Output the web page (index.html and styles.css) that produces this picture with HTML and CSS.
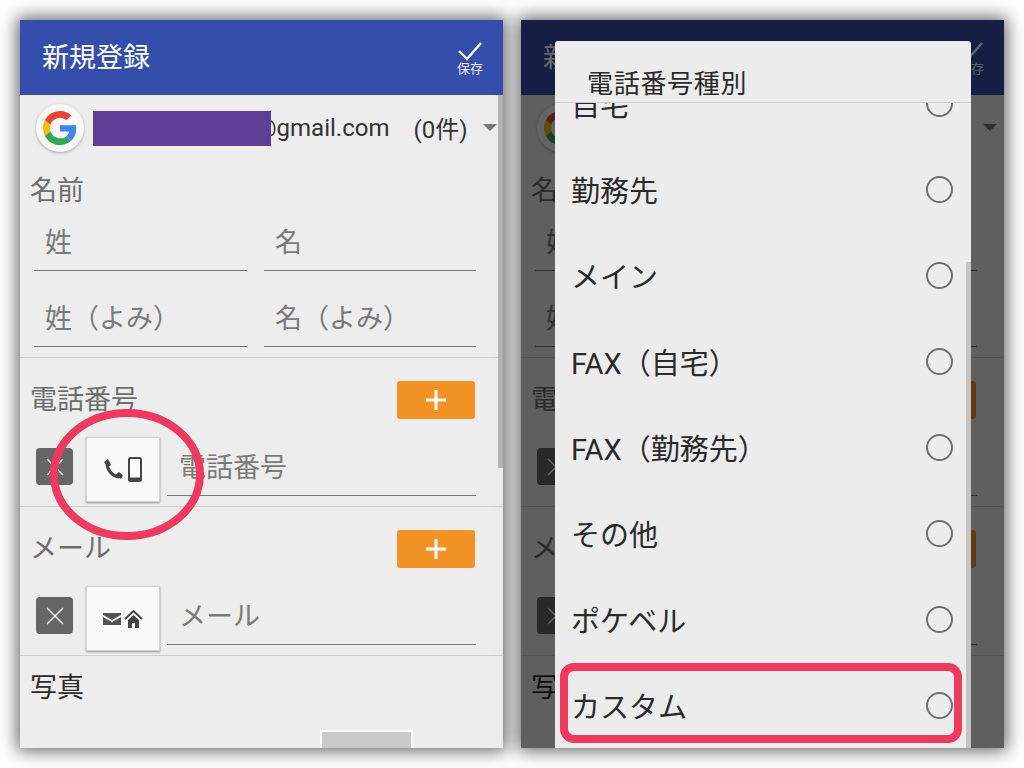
FILE: index.html
```html
<!DOCTYPE html>
<html lang="ja">
<head>
    <meta charset="UTF-8">
    <meta name="viewport" content="width=device-width, initial-scale=1.0">
    <title>新規登録</title>
    <link rel="stylesheet" href="styles.css">
</head>
<body>
    <!-- Left screen: the form -->
    <div class="screen">
        <div class="app-bar">
            <div class="app-title">新規登録</div>
            <div class="save">
                <svg class="save-check" width="26" height="20" viewBox="0 0 26 20"><path d="M2 10l8 8L24 2" fill="none" stroke="#fff" stroke-width="2.4"/></svg>
                <span>保存</span>
            </div>
        </div>
        <div class="scroll-bar"></div>
        <div class="account">
            <div class="g-badge">
                <svg width="34" height="34" viewBox="0 0 48 48"><path fill="#EA4335" d="M24 9.5c3.5 0 6.7 1.3 9.1 3.5l6.8-6.8C35.8 2.4 30.3 0 24 0 14.6 0 6.5 5.4 2.6 13.2l7.9 6.2C12.4 13.6 17.7 9.5 24 9.5z"/><path fill="#4285F4" d="M46.9 24.5c0-1.6-.1-3.1-.4-4.5H24v9h12.9c-.6 3-2.2 5.5-4.7 7.2l7.6 5.9c4.4-4.1 7.1-10.1 7.1-17.600z"/><path fill="#FBBC05" d="M10.5 28.6c-.5-1.4-.8-3-.8-4.6s.3-3.2.8-4.6l-7.9-6.2C.9 16.5 0 20.1 0 24s.9 7.500 2.600 10.800l7.900-6.200z"/><path fill="#34A853" d="M24 48c6.5 0 11.9-2.1 15.8-5.9l-7.6-5.9c-2.1 1.4-4.9 2.3-8.2 2.3-6.3 0-11.6-4.1-13.5-9.9l-7.9 6.2C6.5 42.6 14.6 48 24 48z"/></svg>
            </div>
            <div class="redact"></div>
            <div class="account-mail">@gmail.com</div>
            <div class="account-count">(0件)</div>
            <div class="caret"></div>
        </div>
        <div class="sec sec-name">
            <div class="sec-label">名前</div>
            <div class="name-grid">
                <div class="field">姓</div>
                <div class="field">名</div>
                <div class="field">姓（よみ）</div>
                <div class="field">名（よみ）</div>
            </div>
        </div>
        <div class="sec">
            <div class="sec-head">
                <div class="sec-title">電話番号</div>
                <div class="add-btn"><svg width="22" height="22" viewBox="0 0 22 22"><path d="M11 1v20M1 11h20" stroke="#fff" stroke-width="3"/></svg></div>
            </div>
            <div class="entry">
                <div class="del-btn"><svg width="20" height="20" viewBox="0 0 20 20"><path d="M2 2l16 16M18 2L2 18" stroke="#fff" stroke-width="1.5"/></svg></div>
                <div class="type-btn">
                    <svg width="38" height="25" viewBox="0 0 38 25"><path d="M3 6c0 7 5 13 12 14" fill="none" stroke="#444" stroke-width="3"/><path d="M0 5l4-3 3 6-3 2zM11 18l4-3 4 3.500-2 3.500z" fill="#444"/><rect x="25" y="1" width="12" height="23" rx="1.5" fill="none" stroke="#444" stroke-width="2"/><path d="M25 20.5h12V24H25z" fill="#444"/></svg>
                </div>
                <div class="entry-input">電話番号</div>
            </div>
        </div>
        <div class="sec">
            <div class="sec-head">
                <div class="sec-title">メール</div>
                <div class="add-btn"><svg width="22" height="22" viewBox="0 0 22 22"><path d="M11 1v20M1 11h20" stroke="#fff" stroke-width="3"/></svg></div>
            </div>
            <div class="entry">
                <div class="del-btn"><svg width="20" height="20" viewBox="0 0 20 20"><path d="M2 2l16 16M18 2L2 18" stroke="#fff" stroke-width="1.5"/></svg></div>
                <div class="type-btn">
                    <svg width="41" height="19" viewBox="0 0 41 19"><path d="M0 4h18v2l-9 5-9-5zM0 8l9 5 9-5v8H0z" fill="#555"/><path d="M22 10l8.5-8L39 10" fill="none" stroke="#444" stroke-width="2"/><path d="M25 11l5.5-5 5.500 5v8h-4v-5h-3v5h-4z" fill="#444"/></svg>
                </div>
                <div class="entry-input">メール</div>
            </div>
        </div>
        <div class="photo-sec">
            <div class="photo-title">写真</div>
            <div class="photo-thumb"></div>
        </div>
        <svg class="ring" width="154" height="131" viewBox="0 0 154 131"><ellipse cx="77" cy="65.5" rx="73" ry="61.5" fill="none" stroke="#ee3a5e" stroke-width="8"/></svg>
    </div>

    <!-- Right screen: same form behind the type dialog -->
    <div class="screen">
        <div class="app-bar">
            <div class="app-title">新規登録</div>
            <div class="save">
                <svg class="save-check" width="26" height="20" viewBox="0 0 26 20"><path d="M2 10l8 8L24 2" fill="none" stroke="#fff" stroke-width="2.4"/></svg>
                <span>保存</span>
            </div>
        </div>
        <div class="account">
            <div class="g-badge">
                <svg width="34" height="34" viewBox="0 0 48 48"><path fill="#EA4335" d="M24 9.5c3.5 0 6.7 1.3 9.1 3.5l6.8-6.8C35.8 2.4 30.3 0 24 0 14.6 0 6.5 5.4 2.6 13.2l7.9 6.2C12.4 13.6 17.7 9.5 24 9.5z"/><path fill="#FBBC05" d="M10.5 28.6c-.5-1.4-.8-3-.8-4.6s.3-3.2.8-4.6l-7.9-6.2C.9 16.5 0 20.1 0 24s.9 7.5 2.6 10.8l7.9-6.2z"/><path fill="#34A853" d="M24 48c6.5 0 11.9-2.1 15.8-5.9l-7.6-5.9c-2.1 1.4-4.9 2.3-8.2 2.3-6.3 0-11.6-4.1-13.5-9.9l-7.9 6.2C6.5 42.6 14.6 48 24 48z"/></svg>
            </div>
            <div class="caret caret-end"></div>
        </div>
        <div class="sec sec-name">
            <div class="sec-label">名前</div>
            <div class="name-grid">
                <div class="field">姓</div>
                <div class="field">名</div>
                <div class="field">姓（よみ）</div>
                <div class="field">名（よみ）</div>
            </div>
        </div>
        <div class="sec">
            <div class="sec-head">
                <div class="sec-title">電話番号</div>
                <div class="add-btn"></div>
            </div>
            <div class="entry">
                <div class="del-btn"><svg width="20" height="20" viewBox="0 0 20 20"><path d="M2 2l16 16M18 2L2 18" stroke="#fff" stroke-width="1.5"/></svg></div>
                <div class="type-btn"></div>
                <div class="entry-input"></div>
            </div>
        </div>
        <div class="sec">
            <div class="sec-head">
                <div class="sec-title">メール</div>
                <div class="add-btn"></div>
            </div>
            <div class="entry">
                <div class="del-btn"><svg width="20" height="20" viewBox="0 0 20 20"><path d="M2 2l16 16M18 2L2 18" stroke="#fff" stroke-width="1.5"/></svg></div>
                <div class="type-btn"></div>
                <div class="entry-input"></div>
            </div>
        </div>
        <div class="photo-sec">
            <div class="photo-title">写真</div>
        </div>

        <div class="dim"></div>
        <div class="dialog">
            <div class="dialog-title">電話番号種別</div>
            <div class="dialog-list">
                <div class="opt opt-first"><span>自宅</span><i class="radio"></i></div>
                <div class="opt"><span>勤務先</span><i class="radio"></i></div>
                <div class="opt"><span>メイン</span><i class="radio"></i></div>
                <div class="opt"><span>FAX（自宅）</span><i class="radio"></i></div>
                <div class="opt"><span>FAX（勤務先）</span><i class="radio"></i></div>
                <div class="opt"><span>その他</span><i class="radio"></i></div>
                <div class="opt"><span>ポケベル</span><i class="radio"></i></div>
                <div class="opt"><span>カスタム</span><i class="radio"></i></div>
            </div>
            <div class="dialog-scroll"></div>
            <div class="custom-mark"></div>
        </div>
    </div>
</body>
</html>
```

FILE: styles.css
```css
html, body {
    height: 100%;
}
body {
    margin: 0;
    padding: 20px 20px 0;
    box-sizing: border-box;
    display: flex;
    gap: 18px;
    overflow: hidden;
    background: #fff;
    font-family: "Roboto", "Noto Sans CJK JP", sans-serif;
    color: #6d6d6d;
}
.screen {
    position: relative;
    width: 483px;
    height: 728px;
    overflow: hidden;
    background: #ededed;
    box-shadow: 0 0 16px 3px rgba(0, 0, 0, 0.6);
}

/* app bar */
.app-bar {
    height: 75px;
    padding: 0 19px 0 22px;
    display: flex;
    align-items: center;
    justify-content: space-between;
    background: #354eac;
    color: #fff;
}
.app-title {
    font-size: 27px;
    margin-top: -4px;
}
.save {
    width: 28px;
    display: flex;
    flex-direction: column;
    align-items: center;
    font-size: 13px;
    line-height: 15px;
    color: #e6e9f5;
    margin-top: 2px;
}
.save-check {
    display: block;
}
.scroll-bar {
    position: absolute;
    right: 0;
    top: 75px;
    width: 5px;
    height: 373px;
    background: #b4b4b4;
}

/* account row */
.account {
    height: 64px;
    display: flex;
    align-items: center;
    padding-left: 16px;
    color: #333;
    font-size: 24px;
}
.g-badge {
    width: 48px;
    height: 48px;
    margin-top: 1px;
    border-radius: 50%;
    display: flex;
    align-items: center;
    justify-content: center;
    background: #f7f7f7;
    box-shadow: 0 1px 3px rgba(0, 0, 0, 0.3);
    flex-shrink: 0;
}
.redact {
    position: relative;
    z-index: 1;
    width: 178px;
    height: 35px;
    margin: 2px -16px 0 9px;
    background: #5f3e97;
    flex-shrink: 0;
}
.account-mail {
    white-space: nowrap;
    margin-top: 2px;
}
.account-count {
    margin-left: 24px;
    white-space: nowrap;
}
.caret {
    width: 0;
    height: 0;
    margin: 0 7px 0 15px;
    border-left: 7px solid transparent;
    border-right: 7px solid transparent;
    border-top: 7px solid #777;
}
.caret-end {
    margin-left: auto;
}

/* form sections */
.sec {
    padding: 23px 28px 4px 16px;
    border-bottom: 1px solid #cfcfcf;
}
.sec-name {
    padding: 12px 27px 10px 14px;
}
.sec-label {
    font-size: 27px;
    line-height: 40px;
    height: 38px;
    margin: 0 0 7px -4px;
}
.sec-head {
    height: 38px;
    display: flex;
    justify-content: space-between;
    align-items: center;
    margin-left: -6px;
}
.sec-title {
    font-size: 27px;
    margin-bottom: 6px;
}
.name-grid {
    display: grid;
    grid-template-columns: 213px 212px;
    column-gap: 17px;
    row-gap: 21px;
}
.field {
    height: 54px;
    padding-left: 11px;
    font-size: 27px;
    line-height: 54px;
    color: #7a7a7a;
    border-bottom: 1px solid #777;
}
.add-btn {
    width: 78px;
    height: 38px;
    border-radius: 3px;
    display: flex;
    align-items: center;
    justify-content: center;
    background: #f39325;
}
.entry {
    height: 65px;
    margin-top: 18px;
    margin-right: -1px;
    display: flex;
    align-items: flex-start;
}
.del-btn {
    width: 37px;
    height: 37px;
    margin-top: 11px;
    border-radius: 4px;
    display: flex;
    align-items: center;
    justify-content: center;
    background: #666;
}
.type-btn {
    width: 74px;
    height: 65px;
    margin-left: 13px;
    box-sizing: border-box;
    border: 1px solid #d2d2d2;
    display: flex;
    align-items: center;
    justify-content: center;
    background: #fafafa;
    box-shadow: 0 1px 2px rgba(0, 0, 0, 0.4);
}
.entry-input {
    flex: 1;
    height: 58px;
    margin-left: 7px;
    padding-left: 12px;
    font-size: 27px;
    line-height: 62px;
    color: #7a7a7a;
    border-bottom: 1px solid #777;
}
.photo-sec {
    position: relative;
    padding: 13px 10px 11px;
}
.photo-title {
    font-size: 27px;
    line-height: 38px;
    color: #2b2b2b;
}
.photo-thumb {
    position: absolute;
    left: 300px;
    top: 74px;
    width: 89px;
    height: 60px;
    border: 2px solid #fff;
    background: #c9c9c9;
}
.ring {
    position: absolute;
    left: 30px;
    top: 389px;
}

/* dialog */
.dim {
    position: absolute;
    inset: 0;
    background: rgba(0, 0, 0, 0.6);
}
.dialog {
    position: absolute;
    left: 34px;
    top: 21px;
    width: 416px;
    bottom: 0;
    overflow: hidden;
    display: flex;
    flex-direction: column;
    border-radius: 3px 3px 0 0;
    background: #ececec;
    color: #2a2a2a;
}
.dialog-title {
    height: 62px;
    flex-shrink: 0;
    padding-left: 32px;
    box-sizing: border-box;
    font-size: 26px;
    line-height: 87px;
    letter-spacing: 0.7px;
    border-bottom: 1px solid #cfcfcf;
}
.dialog-list {
    flex: 1;
    overflow: hidden;
}
.opt {
    height: 86px;
    padding: 0 18px 0 16px;
    display: flex;
    align-items: center;
    justify-content: space-between;
    font-size: 29px;
}
.opt-first {
    margin-top: -43px;
}
.radio {
    width: 23px;
    height: 23px;
    border: 2px solid #707070;
    border-radius: 50%;
    flex-shrink: 0;
}
.dialog-scroll {
    position: absolute;
    right: 0;
    top: 221px;
    bottom: 0;
    width: 5px;
    background: #c4c4c4;
}
.custom-mark {
    position: absolute;
    left: 5px;
    top: 622px;
    width: 386px;
    height: 64px;
    border: 8px solid #ee3a5e;
    border-radius: 14px;
}
```
